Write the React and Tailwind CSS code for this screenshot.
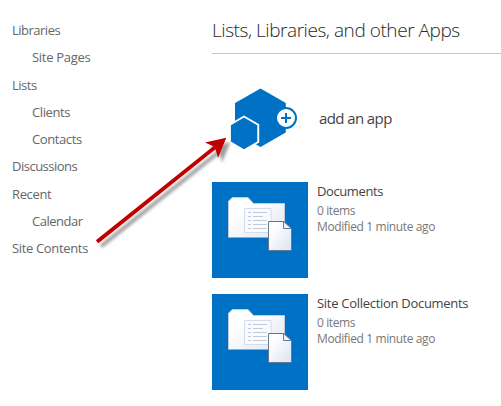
const NAV = [
  { label: 'Libraries', cls: 'pl-3 tracking-[-0.5px]' },
  { label: 'Site Pages', cls: 'pl-8 tracking-[-0.3px]' },
  { label: 'Lists', cls: 'pl-3 tracking-[-0.5px]' },
  { label: 'Clients', cls: 'pl-8 tracking-[-0.4px]' },
  { label: 'Contacts', cls: 'pl-8 tracking-[-0.4px]' },
  { label: 'Discussions', cls: 'pl-3 tracking-[-0.5px]' },
  { label: 'Recent', cls: 'pl-3 tracking-[-0.35px]' },
  { label: 'Calendar', cls: 'pl-8 tracking-[-0.5px]' },
  { label: 'Site Contents', cls: 'pl-3 tracking-[-0.34px]' },
];

function AddAppIcon() {
  return (
    <svg width="96" height="64" viewBox="0 0 96 64" className="block shrink-0">
      <path d="M48.5 2.5 73.8 17v29.5L48.5 61 23 46.5V17z" fill="#0072c6" />
      <path d="M32 31.5 45.5 39.2V55.5L32 63.2 18.9 55.5V39.2z" fill="#0072c6" stroke="#fff" strokeWidth="3.4" />
      <path d="M32 31.5 45.3 39.2V55.5L32 63.2 18.9 55.5V39.2z" fill="#0072c6" />
      <circle cx="74" cy="32" r="10" fill="#fff" stroke="#0072c6" strokeWidth="2" />
      <path d="M69 32h10M74 27v10" stroke="#0072c6" strokeWidth="2" />
    </svg>
  );
}

function LibraryTile() {
  return (
    <svg width="96" height="96" viewBox="0 0 96 96" className="block shrink-0 bg-[#0072c6]">
      <defs>
        <linearGradient id="folder" x1="0" y1="0" x2="1" y2="1">
          <stop offset="0.3" stopColor="#fff" />
          <stop offset="1" stopColor="#dfe6f4" />
        </linearGradient>
        <linearGradient id="sheet" x1="0" y1="0" x2="1" y2="1">
          <stop offset="0.2" stopColor="#fff" />
          <stop offset="1" stopColor="#dbe4f3" />
        </linearGradient>
      </defs>
      <path d="M16.5 19.2 20.2 15.5H36l5.5 6h31V55.5h-56z" fill="url(#folder)" stroke="#c3cbd8" />
      <path d="M16 55.5h57" stroke="#9aa9bd" />
      <path d="M32.5 26.5h26.5v24H32.5z" fill="#fafbfe" stroke="#d3dcee" />
      <path d="M36 30.5h3M36 34.5h3M36 38.5h3M36 42.5h3M36 46.5h3M41 30.5h14M41 34.5h10M41 38.5h14M41 42.5h14M41 46.5h14" stroke="#c0cada" />
      <path d="M56.5 39.5H72l7.5 7.5V68.5h-23z" fill="url(#sheet)" stroke="#66788f" />
      <path d="M71.5 39.5v7h8z" fill="#f2f5fb" stroke="#66788f" />
    </svg>
  );
}

function Library({ name, nameCls }) {
  return (
    <div className="flex h-24 gap-[9px]">
      <LibraryTile />
      <div className="whitespace-nowrap text-[12px] leading-4 text-[#777]">
        <div className={'h-5 text-[13px] leading-[18px] text-[#444] ' + nameCls}>{name}</div>
        <div className="pt-px tracking-[-0.4px]">0 items</div>
        <div className="tracking-[-0.38px]">Modified 1 minute ago</div>
      </div>
    </div>
  );
}

function Arrow() {
  return (
    <svg width="150" height="130" viewBox="90 125 150 130" className="pointer-events-none absolute left-[90px] top-[125px]">
      <defs>
        <filter id="soft" x="-10%" y="-10%" width="125%" height="125%">
          <feDropShadow dx="4" dy="4.5" stdDeviation="1.5" floodColor="#000" floodOpacity="0.38" />
        </filter>
      </defs>
      <path d="M226.3 137.7 218 158 215.6 149.2 98.4 243.3 95.8 240.3 213.3 146.2 205 142.4z" fill="#c00000" filter="url(#soft)" />
    </svg>
  );
}

export default function App() {
  return (
    <div className="relative flex h-[406px] w-[501px] overflow-hidden bg-white font-['Open_Sans','Noto_Sans',sans-serif]">
      <nav className="w-[212px] shrink-0 pt-[17px] text-[13px] leading-[27.25px] text-[#666]">
        {NAV.map((item) => (
          <div key={item.label} className={'whitespace-nowrap ' + item.cls}>{item.label}</div>
        ))}
      </nav>
      <main className="w-[289px]">
        <h1 className="h-[54px] border-b border-[#c6c6c6] pt-4 text-[19px] font-light leading-7 tracking-[-0.44px] whitespace-nowrap text-[#262626]">
          Lists, Libraries, and other Apps
        </h1>
        <div className="flex h-32 gap-[11px] pt-8">
          <AddAppIcon />
          <div className="h-16 whitespace-nowrap text-[15px] leading-[64px] tracking-[-0.6px] text-[#444]">add an app</div>
        </div>
        <div className="flex flex-col gap-4">
          <Library name="Documents" nameCls="tracking-[-0.4px]" />
          <Library name="Site Collection Documents" nameCls="tracking-[-0.29px]" />
        </div>
      </main>
      <Arrow />
    </div>
  );
}
